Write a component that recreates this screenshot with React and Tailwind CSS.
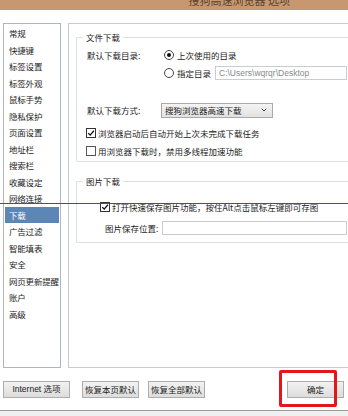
import { ChevronDown } from 'lucide-react'

const items = [
  '常规', '快捷键', '标签设置', '标签外观', '鼠标手势', '隐私保护', '页面设置', '地址栏', '搜索栏',
  '收藏设定', '网络连接', '下载', '广告过滤', '智能填表', '安全', '网页更新提醒', '账户', '高级',
]

const Check = () => (
  <span className="flex h-[10px] w-[10px] shrink-0 items-center justify-center border border-[#333] bg-white">
    <svg viewBox="0 0 10 10" className="h-[8px] w-[8px]">
      <path d="M1.5 5.2 L4 7.6 L8.6 2.2" fill="none" stroke="#111" strokeWidth="1.6" />
    </svg>
  </span>
)

const Box = () => <span className="h-[10px] w-[10px] shrink-0 border border-[#555] bg-white" />

const Radio = ({ on }) => (
  <span className="flex h-[10px] w-[10px] shrink-0 items-center justify-center rounded-full border border-[#444] bg-white">
    {on && <span className="h-[4px] w-[4px] rounded-full bg-[#111]" />}
  </span>
)

const Btn = ({ children, className = '' }) => (
  <button className={`h-[17px] whitespace-nowrap border border-[#adadad] bg-gradient-to-b from-[#f2f2f2] to-[#dddddd] text-[8.5px] leading-none text-[#222] ${className}`}>
    {children}
  </button>
)

export default function App() {
  return (
    <div className="relative flex h-[416px] w-[348px] flex-col overflow-hidden bg-white font-['Noto_Sans_CJK_SC',sans-serif] text-[8.5px] text-[#1c1c1c]">
      <div className="flex h-[10px] shrink-0 justify-end overflow-hidden bg-[#c7986f] pr-[58px]">
        <span className="-mt-[7px] whitespace-nowrap text-[11px] leading-[14px] text-[#5b4332]">搜狗高速浏览器 选项</span>
      </div>

      <div className="mt-[13px] flex h-[345px] shrink-0 gap-[7px] pl-[3px]">
        <ul className="w-[58px] shrink-0 border border-[#aeb7c1] px-[1px] pt-[1px]">
          {items.map(t => (
            <li
              key={t}
              className={`h-[16.5px] whitespace-nowrap pl-[4px] leading-[16.5px] tracking-[-0.2px] ${t === '下载' ? 'bg-[#5b86b6] text-white' : ''}`}
            >
              {t}
            </li>
          ))}
        </ul>

        <div className="min-w-0 flex-1 overflow-hidden border border-r-0 border-[#c5ccd3] pl-[7px] pt-[7px]">
          <fieldset className="min-w-0 rounded-l-[2px] border border-r-0 border-[#dde1e5] pb-[2px] pl-[10px] pr-[1px]">
            <legend className="-ml-[4px] h-[12px] px-[3px] leading-[12px]">文件下载</legend>
            <div className="mt-[4px] flex h-[16px] items-center whitespace-nowrap">
              <span className="w-[77px] shrink-0">默认下载目录:</span>
              <Radio on />
              <span className="ml-[3px]">上次使用的目录</span>
            </div>
            <div className="mt-[2px] flex h-[16px] items-center whitespace-nowrap pl-[77px]">
              <Radio />
              <span className="ml-[3px] w-[38px] shrink-0">指定目录</span>
              <div className="flex h-[14px] min-w-0 flex-1 items-center border border-[#c9cdd1] pl-[3px] font-['Liberation_Sans',sans-serif] text-[8.5px] text-[#8a8a8a]">
                C:\Users\wqrqr\Desktop
              </div>
            </div>
            <div className="mt-[21px] flex h-[16px] items-center whitespace-nowrap">
              <span className="w-[74px] shrink-0">默认下载方式:</span>
              <div className="flex h-[15px] w-[112px] items-center justify-between border border-[#a9a9a9] bg-gradient-to-b from-[#f4f4f4] to-[#e2e2e2] pl-[3px] pr-[4px]">
                <span>搜狗浏览器高速下载</span>
                <ChevronDown className="h-[8px] w-[8px] text-[#444]" strokeWidth={3} />
              </div>
            </div>
            <div className="mt-[7px] -ml-[1px] flex h-[16px] items-center gap-[2px] whitespace-nowrap">
              <Check />
              <span>浏览器启动后自动开始上次未完成下载任务</span>
            </div>
            <div className="mt-[2px] -ml-[1px] flex h-[16px] items-center gap-[2px] whitespace-nowrap">
              <Box />
              <span>用浏览器下载时，禁用多线程加速功能</span>
            </div>
          </fieldset>

          <fieldset className="mt-[13px] min-w-0 rounded-l-[2px] border border-r-0 border-[#dde1e5] pb-[6px] pl-[23px] pr-[1px]">
            <legend className="-ml-[17px] h-[12px] px-[3px] leading-[12px]">图片下载</legend>
            <div className="mt-[12px] flex h-[16px] items-center gap-[2px] whitespace-nowrap">
              <Check />
              <span>打开快速保存图片功能，按住Alt点击鼠标左键即可存图</span>
            </div>
            <div className="mt-[5px] flex h-[16px] items-center whitespace-nowrap pl-[5px]">
              <span className="w-[57px] shrink-0">图片保存位置:</span>
              <div className="h-[14px] min-w-0 flex-1 border border-[#c9cdd1]" />
            </div>
          </fieldset>
        </div>
      </div>

      <div className="mt-[13px] flex h-[17px] shrink-0 pl-[3px]">
        <Btn className="w-[67px] font-['Liberation_Sans','Noto_Sans_CJK_SC',sans-serif]">Internet 选项</Btn>
        <Btn className="ml-[12px] w-[57px]">恢复本页默认</Btn>
        <Btn className="ml-[9px] w-[57px]">恢复全部默认</Btn>
        <Btn className="ml-[82px] w-[57px] border-[#7ea6d3]">确定</Btn>
      </div>

      <div className="mt-[12px] h-[6px] shrink-0 border-t border-[#9c9c9c] bg-[#f0f0f0]" />

      <div className="absolute left-0 top-[203px] h-px w-[348px] bg-[#b3262a]" />
      <div className="absolute left-[279px] top-[370px] h-[37px] w-[58px] rounded-[2px] border-[3px] border-[#e3161b]" />
    </div>
  )
}
